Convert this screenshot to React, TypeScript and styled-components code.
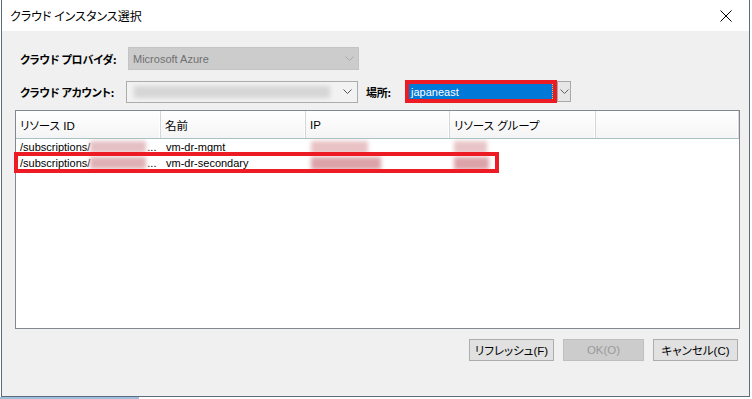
import React from "react";
import styled, { createGlobalStyle } from "styled-components";

const GlobalStyle = createGlobalStyle`
  html, body { margin: 0; padding: 0; background: #ffffff; }
  body {
    font-family: "Liberation Sans", "Noto Sans CJK JP", sans-serif;
    font-size: 11px;
    color: #000;
    font-feature-settings: "palt";
  }
  * { box-sizing: border-box; }
`;

const Page = styled.div`
  width: 752px;
  height: 399px;
  display: flex;
  flex-direction: column;
  overflow: hidden;
`;

const Window = styled.div`
  margin-left: 1px;
  width: 749px;
  height: 397px;
  border: 1px solid #5d6c7c;
  border-top: none;
  background: #f0f0f0;
  display: flex;
  flex-direction: column;
`;

const TitleBar = styled.div`
  height: 31px;
  background: #ffffff;
  display: flex;
  align-items: center;
  justify-content: space-between;
  padding-left: 8px;
  flex: none;
`;

const Title = styled.span`
  font-size: 12px;
  font-family: "Noto Sans CJK JP", sans-serif;
`;

const CloseBox = styled.div`
  width: 46px;
  height: 31px;
  display: flex;
  align-items: center;
  justify-content: center;
`;

const Body = styled.div`
  flex: 1;
  display: flex;
  flex-direction: column;
  padding: 16px 9px 0 13px;
`;

const FormRow = styled.div<{ $mb: number }>`
  display: flex;
  align-items: center;
  padding-left: 5px;
  margin-bottom: ${(p) => p.$mb}px;
`;

const Label = styled.span<{ $w: number }>`
  width: ${(p) => p.$w}px;
  flex: none;
  font-weight: bold;
  font-size: 11px;
  letter-spacing: -0.2px;
  font-family: "Noto Sans CJK JP", sans-serif;
`;

const Combo = styled.div<{ $w: number; $h: number; $disabled?: boolean }>`
  width: ${(p) => p.$w}px;
  height: ${(p) => p.$h}px;
  flex: none;
  display: flex;
  align-items: center;
  border: 1px solid ${(p) => (p.$disabled ? "#c4c4c4" : "#acacac")};
  background: ${(p) => (p.$disabled ? "#cccccc" : "#f2f2f2")};
  color: ${(p) => (p.$disabled ? "#707070" : "#000")};
  padding-left: 4px;
`;

const ComboText = styled.span`
  flex: 1;
`;

const BlurFill = styled.div<{ $w: number; $color: string; $h: number }>`
  width: ${(p) => p.$w}px;
  height: ${(p) => p.$h}px;
  background: ${(p) => p.$color};
  filter: blur(2px);
  flex: none;
`;

const ChevronBox = styled.div<{ $w: number }>`
  width: ${(p) => p.$w}px;
  display: flex;
  align-items: center;
  justify-content: center;
  flex: none;
`;

const LocLabel = styled(Label)`
  margin-left: 8px;
`;

const LocField = styled.div`
  width: 152px;
  height: 23px;
  border: 4px solid #ed1c24;
  background: #0078d7;
  display: flex;
  align-items: center;
  padding-left: 2px;
  flex: none;
  position: relative;
`;

const LocText = styled.span`
  color: #ffffff;
  font-size: 11px;
`;

const FocusDots = styled.div`
  position: absolute;
  right: 0;
  top: 0;
  bottom: 0;
  width: 1px;
  border-right: 1px dotted #f0c040;
`;

const DropButton = styled.div`
  width: 14px;
  height: 21px;
  border: 1px solid #a8a8a8;
  background: #e6e6e6;
  display: flex;
  align-items: center;
  justify-content: center;
  flex: none;
`;

const List = styled.div`
  margin-top: 7px;
  width: 725px;
  height: 219px;
  border: 1px solid #828790;
  background: #ffffff;
  position: relative;
`;

const cols = "145px 145px 144px 146px 1fr";

const Header = styled.div`
  display: grid;
  grid-template-columns: ${cols};
  height: 28px;
  border-bottom: 1px solid #a6c2c2;
`;

const HeadCell = styled.div`
  display: flex;
  align-items: center;
  padding-left: 4px;
  background: linear-gradient(#ffffff, #f4f4f4);
  border-right: 1px solid #d3d6da;
  box-shadow: inset -1px 0 0 #ffffff;
  font-size: 11.5px;
`;

const Row = styled.div`
  display: grid;
  grid-template-columns: ${cols};
  height: 16px;
  align-items: center;
`;

const Cell = styled.div`
  display: flex;
  align-items: center;
  padding-left: 4px;
  white-space: nowrap;
  overflow: hidden;
  height: 16px;
`;

const NameCell = styled(Cell)`
  padding-left: 5px;
`;

const Dots = styled.span`
  margin-left: 1px;
`;

const HighlightBox = styled.div`
  position: absolute;
  left: -2px;
  top: 41px;
  width: 485px;
  height: 21px;
  border: 4px solid #ed1c24;
  pointer-events: none;
`;

const ButtonRow = styled.div`
  display: flex;
  justify-content: flex-end;
  gap: 9px;
  margin-top: 10px;
  padding-right: 2px;
`;

const Button = styled.div<{ $w: number; $disabled?: boolean }>`
  width: ${(p) => p.$w}px;
  height: 22px;
  border: 1px solid ${(p) => (p.$disabled ? "#bfbfbf" : "#adadad")};
  background: ${(p) => (p.$disabled ? "#cccccc" : "#e1e1e1")};
  color: ${(p) => (p.$disabled ? "#9a9a9a" : "#000")};
  display: flex;
  align-items: center;
  justify-content: center;
  font-size: 11.5px;
`;

const BottomStrip = styled.div`
  height: 2px;
  display: flex;
`;

const StripBlue = styled.div`
  width: 139px;
  background: #9fbedb;
`;

const Chevron = ({ color }: { color: string }) => (
  <svg width="9" height="5" viewBox="0 0 9 5">
    <polyline points="0.5,0.5 4.5,4.5 8.5,0.5" fill="none" stroke={color} strokeWidth="1" />
  </svg>
);

export default function App() {
  return (
    <Page>
      <GlobalStyle />
      <Window>
        <TitleBar>
          <Title>クラウド インスタンス選択</Title>
          <CloseBox>
            <svg width="12" height="12" viewBox="0 0 12 12">
              <path d="M0.5 0.5 L11.5 11.5 M11.5 0.5 L0.5 11.5" stroke="#000" strokeWidth="1" />
            </svg>
          </CloseBox>
        </TitleBar>
        <Body>
          <FormRow $mb={10}>
            <Label $w={108}>クラウド プロバイダ:</Label>
            <Combo $w={231} $h={23} $disabled>
              <ComboText>Microsoft Azure</ComboText>
              <ChevronBox $w={18}>
                <Chevron color="#a8a8a8" />
              </ChevronBox>
            </Combo>
          </FormRow>
          <FormRow $mb={0}>
            <Label $w={106}>クラウド アカウント:</Label>
            <Combo $w={232} $h={22}>
              <ChevronBox $w={3} />
              <BlurFill $w={196} $h={12} $color="#d6d6d6" />
              <ComboText />
              <ChevronBox $w={20}>
                <Chevron color="#555555" />
              </ChevronBox>
            </Combo>
            <LocLabel $w={39}>場所:</LocLabel>
            <LocField>
              <LocText>japaneast</LocText>
              <FocusDots />
            </LocField>
            <DropButton>
              <Chevron color="#606060" />
            </DropButton>
          </FormRow>
          <List>
            <Header>
              <HeadCell>リソース ID</HeadCell>
              <HeadCell>名前</HeadCell>
              <HeadCell>IP</HeadCell>
              <HeadCell>リソース グループ</HeadCell>
              <HeadCell />
            </Header>
            <Row>
              <Cell>
                /subscriptions/
                <BlurFill $w={56} $h={12} $color="#e4bfc3" />
                <Dots>...</Dots>
              </Cell>
              <NameCell>vm-dr-mgmt</NameCell>
              <NameCell>
                <BlurFill $w={57} $h={13} $color="#e8c2c5" />
              </NameCell>
              <Cell>
                <BlurFill $w={33} $h={13} $color="#e8c4c7" />
              </Cell>
              <Cell />
            </Row>
            <Row>
              <Cell>
                /subscriptions/
                <BlurFill $w={56} $h={12} $color="#dfb0b5" />
                <Dots>...</Dots>
              </Cell>
              <NameCell>vm-dr-secondary</NameCell>
              <NameCell>
                <BlurFill $w={70} $h={13} $color="#dca3a9" />
              </NameCell>
              <Cell>
                <BlurFill $w={35} $h={13} $color="#dca3a9" />
              </Cell>
              <Cell />
            </Row>
            <HighlightBox />
          </List>
          <ButtonRow>
            <Button $w={85}>リフレッシュ(F)</Button>
            <Button $w={81} $disabled>OK(O)</Button>
            <Button $w={85}>キャンセル(C)</Button>
          </ButtonRow>
        </Body>
      </Window>
      <BottomStrip>
        <StripBlue />
      </BottomStrip>
    </Page>
  );
}
